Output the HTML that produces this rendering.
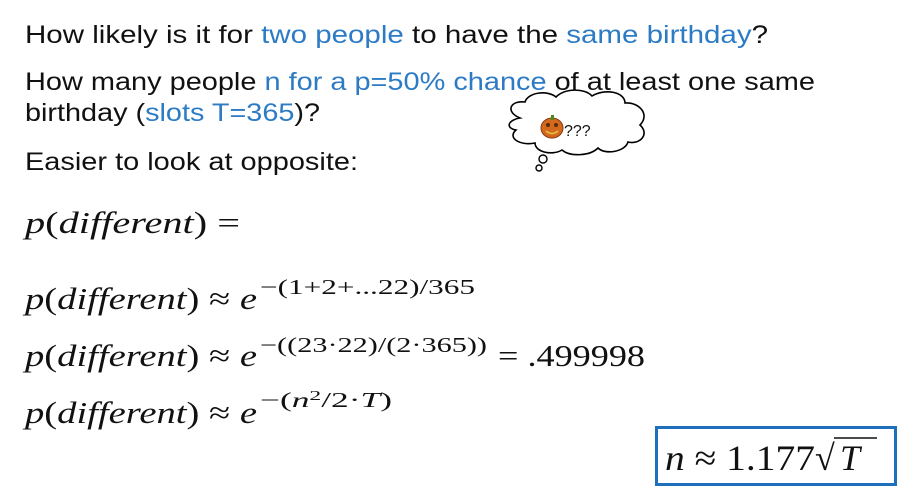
<!DOCTYPE html>
<html><head><style>html,body{margin:0;padding:0;background:#fff;width:903px;height:500px;overflow:hidden}
.s{font-family:"Liberation Sans",sans-serif}
.m{font-family:"Liberation Serif",serif}
</style></head>
<body>
<svg width="903" height="500" viewBox="0 0 903 500" xmlns="http://www.w3.org/2000/svg">
<g class="s" font-size="25" fill="#111">
<text x="25" y="43" textLength="743" lengthAdjust="spacingAndGlyphs">How likely is it for <tspan fill="#2c7bc4">two people</tspan> to have the <tspan fill="#2c7bc4">same birthday</tspan>?</text>
<text x="25" y="90" textLength="790" lengthAdjust="spacingAndGlyphs">How many people <tspan fill="#2c7bc4">n for a p=50% chance</tspan> of at least one same</text>
<text x="25" y="121" textLength="295" lengthAdjust="spacingAndGlyphs">birthday (<tspan fill="#2c7bc4">slots T=365</tspan>)?</text>
<text x="25" y="170" textLength="333" lengthAdjust="spacingAndGlyphs">Easier to look at opposite:</text>
</g>
<path d="M520,118 C505,112 510,100 525,102 C528,92 548,90 556,97 C565,88 585,88 592,96 C605,88 625,92 625,103 C640,102 650,115 640,125 C650,134 640,145 628,142 C625,152 605,155 598,148 C590,156 570,157 562,150 C552,156 535,152 535,143 C520,146 507,138 516,130 C505,128 508,120 520,118 Z" fill="#fff" stroke="#000" stroke-width="1.6"/>
<circle cx="543" cy="159" r="4" fill="#fff" stroke="#000" stroke-width="1.4"/>
<circle cx="539" cy="168" r="3" fill="#fff" stroke="#000" stroke-width="1.4"/>
<ellipse cx="552" cy="128" rx="11" ry="10" fill="#d2691e" stroke="#8b3a0e" stroke-width="1"/>
<rect x="551" y="115" width="3" height="5" fill="#4a8a20"/>
<circle cx="548" cy="125" r="2" fill="#5a2a0a"/><circle cx="556" cy="125" r="2" fill="#5a2a0a"/>
<path d="M546,131 Q552,136 558,131" stroke="#e8c040" stroke-width="1.5" fill="none"/>
<text x="564" y="136" class="s" font-size="16" fill="#111">???</text>
<g class="m" fill="#111">
<text x="25" y="233" font-size="31" textLength="215" lengthAdjust="spacingAndGlyphs"><tspan font-style="italic">p</tspan>(<tspan font-style="italic">different</tspan>) =</text>
<text x="25" y="309" font-size="31" textLength="232" lengthAdjust="spacingAndGlyphs"><tspan font-style="italic">p</tspan>(<tspan font-style="italic">different</tspan>) ≈ <tspan font-style="italic">e</tspan></text>
<text x="260" y="294" font-size="21" textLength="215" lengthAdjust="spacingAndGlyphs">−(1+2+...22)/365</text>
<text x="25" y="366" font-size="31" textLength="232" lengthAdjust="spacingAndGlyphs"><tspan font-style="italic">p</tspan>(<tspan font-style="italic">different</tspan>) ≈ <tspan font-style="italic">e</tspan></text>
<text x="260" y="352" font-size="21" textLength="227" lengthAdjust="spacingAndGlyphs">−((23·22)/(2·365))</text>
<text x="498" y="366" font-size="31" textLength="147" lengthAdjust="spacingAndGlyphs">= .499998</text>
<text x="25" y="423" font-size="31" textLength="232" lengthAdjust="spacingAndGlyphs"><tspan font-style="italic">p</tspan>(<tspan font-style="italic">different</tspan>) ≈ <tspan font-style="italic">e</tspan></text>
<text x="260" y="407" font-size="21" textLength="132" lengthAdjust="spacingAndGlyphs">−(<tspan font-style="italic">n</tspan><tspan font-size="14" dy="-7">2</tspan><tspan dy="7">/2·</tspan><tspan font-style="italic">T</tspan>)</text>
</g>
<rect x="656.5" y="427.5" width="239" height="57" fill="#fff" stroke="#1f6fbf" stroke-width="3"/>
<g class="m" fill="#111" font-size="36">
<text x="665" y="470" textLength="150" lengthAdjust="spacingAndGlyphs"><tspan font-style="italic">n</tspan> ≈ 1.177</text>
<text x="815" y="470">√</text>
<line x1="834" y1="438" x2="877" y2="438" stroke="#111" stroke-width="1.5"/>
<text x="840" y="470" font-style="italic">T</text>
</g>
</svg>
</body></html>
